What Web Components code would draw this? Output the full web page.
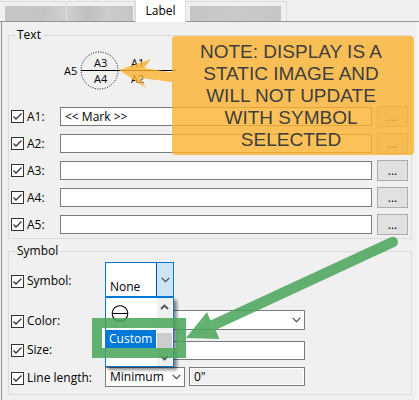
<!DOCTYPE html>
<html lang="en">
<head>
<meta charset="utf-8">
<title>Label settings</title>
<style>
  body { margin: 0; background: #f0f0f0; color: #000; font: 12px/18px "Open Sans", "Noto Sans", sans-serif; }
</style>
</head>
<body>
<label-dialog></label-dialog>
<script>
const define = (name, html, setup) => customElements.define(name, class extends HTMLElement {
  constructor() {
    super();
    this.attachShadow({ mode: 'open' }).innerHTML = html;
  }
  connectedCallback() { if (setup) setup(this, this.shadowRoot); }
});

define('tab-strip', `
<style>
  :host { display: flex; height: 21px; border-bottom: 1px solid #8b979b; }
  button { box-sizing: border-box; height: 20px; margin: 1px 0 0; padding: 3px 4px 0 5px; border: 1px solid #dcdcdc; border-width: 1px 1px 0 0; background: #f0f0f0; font: inherit; }
  .one { width: 67px; padding-right: 0; }
  .two { width: 68px; padding-left: 0; padding-right: 1px; }
  .three { width: 101px; padding-left: 4px; padding-right: 5px; }
  span { display: block; height: 15px; }
  .one span { background: linear-gradient(90deg, #c6c5c7, #c4c4c5 65%, #d2d1d2); }
  .two span { background: linear-gradient(90deg, #d0cfd0, #bfbfc1 30%, #cdcbcb 60%, #c5c5c7); }
  .three span { background: linear-gradient(90deg, #c5c5c6, #cbc9c9 50%, #c5c5c8); }
  .active { height: 22px; width: 51px; margin: 0; padding: 0; border-width: 0 1px 0 1px; background: #fff; position: relative; }
</style>
<button class="one" aria-label="First tab"><span></span></button>
<button class="two" aria-label="Second tab"><span></span></button>
<button class="active">Label</button>
<button class="three" aria-label="Fourth tab"><span></span></button>`);

define('group-box', `
<style>
  :host { display: block; }
  fieldset { min-width: 0; margin: 0; padding: 0 3px 3px 2px; border: 1px solid #dcdcdc; }
  legend { margin-left: 4px; padding: 0 2px; height: 18px; }
</style>
<fieldset><legend><slot name="title"></slot></legend><slot></slot></fieldset>`);

define('check-label', `
<style>
  :host { display: block; }
  label { display: flex; align-items: center; gap: 3px; white-space: nowrap; }
  .box { display: grid; width: 13px; height: 13px; }
  .box > * { grid-area: 1 / 1; }
  input { appearance: none; box-sizing: border-box; width: 13px; height: 13px; margin: 0; border: 1px solid #333; background: #fff; }
  svg { visibility: hidden; pointer-events: none; }
  input:checked + svg { visibility: visible; }
</style>
<label><span class="box"><input type="checkbox" checked><svg width="13" height="13" viewBox="0 0 13 13"><path d="M2.5 6.5 5 9 10.5 3.5" fill="none" stroke="#333" stroke-width="1.3"/></svg></span><slot></slot></label>`);

define('text-field', `
<style>
  :host { display: block; min-width: 0; }
  input { display: block; box-sizing: border-box; width: 100%; height: 19px; margin: 0; padding: 0 4px; border: 1px solid #7a7a7a; border-radius: 0; background: #fff; color: #000; font: inherit; }
  input:disabled { background: #f0f0f0; box-shadow: inset 0 0 0 1px #fff; }
</style>
<input type="text">`, (host, root) => {
  const input = root.querySelector('input');
  input.value = host.getAttribute('value') || '';
  input.disabled = host.hasAttribute('disabled');
  input.setAttribute('aria-label', host.getAttribute('label'));
});

define('mark-row', `
<style>
  :host { display: grid; grid-template-columns: 44px 1fr 31px; column-gap: 5px; align-items: center; height: 21px; margin-bottom: 6px; }
  :host(:last-of-type) { margin-bottom: 0; }
  button { height: 21px; padding: 0; border: 1px solid #adadad; background: #e1e1e1; color: #000; font: inherit; line-height: 18px; }
</style>
<check-label></check-label><text-field></text-field><button>...</button>`, (host, root) => {
  const name = host.getAttribute('name');
  root.querySelector('check-label').textContent = name + ':';
  const field = root.querySelector('text-field');
  const input = field.shadowRoot.querySelector('input');
  input.value = host.getAttribute('value') || '';
  input.setAttribute('aria-label', name);
  root.querySelector('button').title = 'Edit ' + name;
});

define('drop-down', `
<style>
  :host { display: grid; position: relative; align-items: center; min-width: 0; }
  select, svg.chevron { grid-area: 1 / 1; }
  select { appearance: none; box-sizing: border-box; width: 100%; height: 20px; margin: 0; padding: 0 16px 0 4px; border: 1px solid #7a7a7a; border-radius: 0; background: #fff; color: #000; font: inherit; }
  svg.chevron { justify-self: end; margin-right: 4px; pointer-events: none; }
  :host([open]) select { height: 35px; padding-top: 14px; border-color: #0078d7; background: linear-gradient(90deg, #005499 1px, #cce4f7 1px) right / 17px 100% no-repeat #fff; }
</style>
<select></select>
<svg class="chevron" width="9" height="6" viewBox="0 0 9 6"><path d="M.7.8 4.5 4.6 8.3.8" fill="none" stroke="#444" stroke-width="1.1"/></svg>
<slot></slot>`, (host, root) => {
  const select = root.querySelector('select');
  select.setAttribute('aria-label', host.getAttribute('label'));
  select.add(new Option(host.getAttribute('value') || ''));
});

define('symbol-list', `
<style>
  :host { display: flex; position: absolute; z-index: 1; top: 100%; left: 0; right: 0; box-sizing: border-box; height: 70px; border: 1px solid #0078d7; background: #fff; box-shadow: 3px 3px 3px rgba(0,0,0,.45); }
  ul { flex: 1; margin: 0; padding: 0; list-style: none; }
  li { height: 18px; line-height: 18px; padding-left: 3px; margin-right: 1px; }
  .glyph { height: 32px; padding-left: 5px; }
  .glyph svg { display: block; padding-top: 7px; }
  .on { background: #0078d7; color: #fff; }
  .bar { display: flex; flex-direction: column; align-items: center; justify-content: space-between; width: 15px; margin-right: 1px; padding: 6px 0 5px; box-sizing: border-box; background: #f0f0f0; }
  .thumb { width: 15px; height: 16px; margin-top: 16px; background: #cdcdcd; }
</style>
<ul role="listbox" aria-label="Symbols">
  <li class="glyph" role="option" aria-label="Divided circle"><svg width="18" height="17" viewBox="0 0 18 17"><circle cx="9" cy="8.5" r="7.8" fill="none" stroke="#000" stroke-width="1.1"/><path d="M1 8.5H17" stroke="#000"/></svg></li>
  <li class="on" role="option" aria-selected="true">Custom</li>
</ul>
<div class="bar">
  <svg width="9" height="6" viewBox="0 0 9 6"><path d="M1 5 4.5 1.5 8 5" fill="none" stroke="#505050" stroke-width="1.8"/></svg>
  <span class="thumb"></span>
  <svg width="9" height="6" viewBox="0 0 9 6"><path d="M1 1 4.5 4.5 8 1" fill="none" stroke="#505050" stroke-width="1.8"/></svg>
</div>`);

define('mark-diagram', `
<style>
  :host { display: block; height: 62px; }
  svg { display: block; margin-left: 49px; }
  text { font: 11px "Open Sans", "Noto Sans", sans-serif; }
</style>
<svg width="120" height="62" viewBox="60 44 120 62" aria-label="Mark layout">
  <circle cx="99.5" cy="70.5" r="18.5" fill="none" stroke="#000" stroke-dasharray="1 1.5"/>
  <path d="M81 70.5H176" stroke="#000"/>
  <text x="64" y="75">A5</text><text x="94" y="67">A3</text><text x="94" y="83">A4</text>
  <text x="131" y="67">A1</text><text x="131" y="83">A2</text>
</svg>`);

define('callout-note', `
<style>
  :host { display: block; position: absolute; z-index: 2; top: 36px; left: 172px; right: 5px; box-sizing: border-box; height: 119px; padding: 5px 22px 0 18px; border-radius: 4px; background: rgba(252,178,48,.8); color: #3e3e3e; font: 19px/22px "Liberation Sans", Arial, sans-serif; text-align: center; }
  p { margin: 0; white-space: nowrap; }
  svg { position: absolute; left: -54px; top: 20px; }
</style>
<p><slot></slot></p>
<svg width="54" height="34" viewBox="118 56 54 34"><path d="M119 70 151 59 144.500 68 172 72.500V82L140 78 146 88Z" fill="#fcb230" fill-opacity=".8"/></svg>`);

define('pointer-arrow', `
<style>
  :host { display: block; position: absolute; z-index: 3; top: 0; left: 0; pointer-events: none; }
  svg { display: block; }
</style>
<svg width="419" height="398" viewBox="0 0 419 398">
  <g fill="#48a559" fill-opacity=".85">
    <path fill-rule="evenodd" d="M92 318H186V358H92ZM102 328V348H176V328Z"/>
    <path d="M186 338 207 312 210.500 320.500 390 237.500A5 5 0 0 1 395.500 246.500L215.500 330 219.500 339Z"/>
  </g>
  <path d="M102 328H105V348H102Z" fill="#fff"/>
</svg>`);

define('label-dialog', `
<style>
  :host { display: block; position: relative; min-height: 100vh; box-sizing: border-box; }
  main { display: flex; flex-direction: column; gap: 3px; margin: 0 1px; padding: 4px 5px 5px 6px; border-left: 1px solid #8b979b; border-right: 1px solid #fff; }
  .row { display: grid; grid-template-columns: 90px 200px; column-gap: 4px; align-items: center; }
  .symbol { grid-template-columns: 90px 69px; height: 35px; margin-top: 2px; }
  .color { height: 20px; margin-top: 12px; }
  .size { height: 20px; margin-top: 11px; }
  .length { grid-template-columns: 90px 80px 116px; height: 20px; margin: 6px 0 5px; }
  .symbol check-label, .color check-label, .length check-label { padding-top: 3px; }
</style>
<tab-strip></tab-strip>
<main>
  <group-box><span slot="title">Text</span>
    <mark-diagram></mark-diagram>
    <mark-row name="A1" value="&lt;&lt; Mark &gt;&gt;"></mark-row>
    <mark-row name="A2"></mark-row>
    <mark-row name="A3"></mark-row>
    <mark-row name="A4"></mark-row>
    <mark-row name="A5"></mark-row>
  </group-box>
  <group-box><span slot="title">Symbol</span>
    <div class="row symbol"><check-label>Symbol:</check-label><drop-down open label="Symbol" value="None"><symbol-list></symbol-list></drop-down></div>
    <div class="row color"><check-label>Color:</check-label><drop-down label="Color"></drop-down></div>
    <div class="row size"><check-label>Size:</check-label><text-field label="Size"></text-field></div>
    <div class="row length"><check-label>Line length:</check-label><drop-down label="Line length type" value="Minimum"></drop-down><text-field label="Line length" value='0"' disabled></text-field></div>
  </group-box>
</main>
<callout-note>NOTE: DISPLAY IS A<br>STATIC IMAGE AND<br>WILL NOT UPDATE<br>WITH SYMBOL<br>SELECTED</callout-note>
<pointer-arrow></pointer-arrow>`);
</script>
</body>
</html>
